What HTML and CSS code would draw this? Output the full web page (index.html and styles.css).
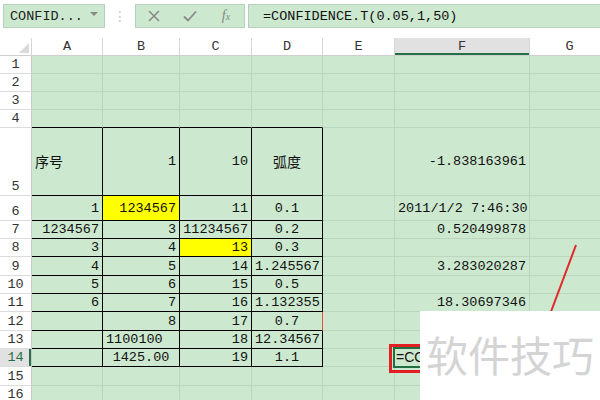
FILE: index.html
```html
<!DOCTYPE html>
<html lang="zh">
<head>
  <meta charset="UTF-8">
  <meta name="viewport" content="width=device-width, initial-scale=1.0">
  <title>CONFIDENCE.T</title>
  <link rel="stylesheet" href="styles.css">
</head>
<body>
  <div class="app">
    <!-- Barra de fórmulas -->
    <div class="toolbar">
      <div class="namebox"><span>CONFID...</span><span class="caret"></span></div>
      <div class="grip">⋮</div>
      <div class="fxbtns">
        <span class="btn">
          <svg width="12" height="12" viewBox="0 0 12 12"><path d="M1 1L11 11M11 1L1 11" stroke="#8a8a8a" stroke-width="1.6" fill="none"/></svg>
        </span>
        <span class="btn">
          <svg width="14" height="12" viewBox="0 0 14 12"><path d="M1 6.5L5 10.5L13 1.5" stroke="#8a8a8a" stroke-width="1.8" fill="none"/></svg>
        </span>
        <span class="btn fx">f<sub>x</sub></span>
      </div>
      <div class="formula">=CONFIDENCE.T(0.05,1,50)</div>
    </div>

    <!-- Hoja -->
    <table class="sheet">
      <colgroup>
        <col class="w-rh"><col class="w-a"><col class="w-b"><col class="w-c"><col class="w-d"><col class="w-e"><col class="w-f"><col class="w-g">
      </colgroup>
      <tr class="h18 head">
        <th class="corner"><span class="tri"></span></th>
        <th>A</th><th>B</th><th>C</th><th>D</th><th>E</th><th class="cur">F</th><th>G</th>
      </tr>
      <tr class="h18"><th class="rh">1</th><td></td><td></td><td></td><td></td><td></td><td></td><td></td></tr>
      <tr class="h18"><th class="rh">2</th><td></td><td></td><td></td><td></td><td></td><td></td><td></td></tr>
      <tr class="h18"><th class="rh">3</th><td></td><td></td><td></td><td></td><td></td><td></td><td></td></tr>
      <tr class="h18"><th class="rh">4</th><td class="tb"></td><td class="tb"></td><td class="tb"></td><td class="tb"></td><td></td><td></td><td></td></tr>
      <tr class="h68"><th class="rh">5</th>
        <td class="t left cn">序号</td><td class="t">1</td><td class="t">10</td><td class="t mid cn">弧度</td><td></td><td>-1.838163961</td><td></td></tr>
      <tr class="h25"><th class="rh">6</th>
        <td class="t">1</td><td class="t hl">1234567</td><td class="t">11</td><td class="t mid">0.1</td><td></td><td>2011/1/2 7:46:30</td><td></td></tr>
      <tr class="h18"><th class="rh">7</th>
        <td class="t">1234567</td><td class="t">3</td><td class="t">11234567</td><td class="t mid">0.2</td><td></td><td>0.520499878</td><td></td></tr>
      <tr class="h18"><th class="rh">8</th>
        <td class="t">3</td><td class="t">4</td><td class="t hl">13</td><td class="t mid">0.3</td><td></td><td></td><td></td></tr>
      <tr class="h19"><th class="rh">9</th>
        <td class="t">4</td><td class="t">5</td><td class="t">14</td><td class="t mid">1.245567</td><td></td><td>3.283020287</td><td></td></tr>
      <tr class="h18"><th class="rh">10</th>
        <td class="t">5</td><td class="t">6</td><td class="t">15</td><td class="t mid">0.5</td><td></td><td></td><td></td></tr>
      <tr class="h18"><th class="rh">11</th>
        <td class="t">6</td><td class="t">7</td><td class="t">16</td><td class="t mid">1.132355</td><td></td><td>18.30697346</td><td></td></tr>
      <tr class="h19"><th class="rh">12</th>
        <td class="t"></td><td class="t">8</td><td class="t">17</td><td class="t mid mark">0.7</td><td></td><td></td><td></td></tr>
      <tr class="h18"><th class="rh">13</th>
        <td class="t"></td><td class="t left">1100100</td><td class="t">18</td><td class="t mid">12.34567</td><td></td><td></td><td></td></tr>
      <tr class="h18"><th class="rh">14</th>
        <td class="t"></td><td class="t mid">1425.00</td><td class="t">19</td><td class="t mid">1.1</td><td></td>
        <td class="sel"><span class="ring-red"></span><span class="ring-green"></span><span class="edit">=CO</span></td><td></td></tr>
      <tr class="h19"><th class="rh">15</th><td></td><td></td><td></td><td></td><td></td><td></td><td></td></tr>
      <tr class="h18"><th class="rh">16</th><td></td><td></td><td></td><td></td><td></td><td></td><td></td></tr>
    </table>

    <!-- Flecha roja y marca de agua -->
    <svg class="arrow" width="600" height="400" viewBox="0 0 600 400">
      <line x1="576" y1="245" x2="546" y2="325" stroke="#e02a2a" stroke-width="2"/>
    </svg>
    <div class="watermark">软件技巧</div>
  </div>
</body>
</html>
```

FILE: styles.css
```css
body, html {
  margin: 0;
  background: #fff;
}

.app {
  position: relative;
  width: 600px;
  height: 400px;
  overflow: hidden;
  font-family: "Liberation Mono", "DejaVu Sans Mono", monospace;
  font-size: 13.5px;
  color: #111;
}

/* Barra de fórmulas */
.toolbar {
  display: flex;
  align-items: stretch;
  height: 24px;
  padding: 4px 0 0 3px;
}

.namebox {
  display: flex;
  align-items: center;
  justify-content: space-between;
  padding: 0 6px 0 6px;
  box-sizing: border-box;
  width: 102px;
  background: #cce8cf;
  border: 1px solid #b9cdbb;
  color: #222;
}

.caret {
  width: 0;
  height: 0;
  border-left: 4px solid transparent;
  border-right: 4px solid transparent;
  border-top: 4px solid #8a8a8a;
  margin-bottom: 4px;
}

.grip {
  width: 30px;
  display: flex;
  align-items: center;
  justify-content: center;
  color: #c4c4c4;
  font-size: 14px;
  font-family: "DejaVu Sans", sans-serif;
}

.fxbtns {
  display: flex;
  width: 110px;
  box-sizing: border-box;
  background: #cce8cf;
  border: 1px solid #b9cdbb;
}

.btn {
  width: 36px;
  display: flex;
  align-items: center;
  justify-content: center;
}

.fx {
  font-family: "Liberation Serif", serif;
  font-style: italic;
  font-size: 14px;
  color: #8a8a8a;
}

.fx sub {
  font-size: 10px;
  vertical-align: -1px;
}

.formula {
  flex: 1;
  margin-left: 3px;
  margin-right: -20px;
  display: flex;
  align-items: center;
  padding-left: 14px;
  background: #cce8cf;
  border: 1px solid #b9cdbb;
  color: #111;
}

/* Hoja */
.sheet {
  margin-top: 10px;
  border-collapse: separate;
  border-spacing: 0;
  table-layout: fixed;
  width: 610px;
}

.w-rh { width: 32px; }
.w-a { width: 71px; }
.w-b { width: 77px; }
.w-c { width: 72px; }
.w-d { width: 71px; }
.w-e { width: 72px; }
.w-f { width: 135px; }
.w-g { width: 80px; }

.h18 { height: 18px; }
.h19 { height: 19px; }
.h25 { height: 25px; }
.h68 { height: 68px; }

.sheet th, .sheet td {
  padding: 0 3px;
  line-height: 15px;
  white-space: nowrap;
  overflow: hidden;
  box-sizing: border-box;
}

.sheet th {
  background: #fff;
  font-weight: normal;
  color: #333;
  text-align: center;
  border-right: 1px solid #d6d6d6;
  border-bottom: 1px solid #dcdcdc;
}

.head th {
  vertical-align: bottom;
  padding-bottom: 1px;
  border-bottom-color: #cfcfcf;
}

.head th.cur {
  background: #e1e1e1;
  box-shadow: inset 0 -2px 0 #217346;
}

.corner {
  padding: 0 !important;
}

.tri {
  display: block;
  width: 0;
  height: 0;
  margin: 0 0 2px 19px;
  border-left: 10px solid transparent;
  border-bottom: 10px solid #dadada;
}

.rh {
  vertical-align: bottom;
  padding: 0 0 1px 0 !important;
  border-right-color: #c9c9c9 !important;
}

.sheet tr:nth-child(15) .rh {
  background: #e1e1e1;
  color: #217346;
  box-shadow: inset -2px 0 0 #217346;
}

.sheet td {
  background: #cce8cf;
  border-right: 1px solid #bdd4bf;
  border-bottom: 1px solid #bdd4bf;
  text-align: right;
  vertical-align: middle;
}

/* Tabla con bordes negros */
.sheet td.t {
  border-right-color: #000;
  border-bottom-color: #000;
}

.sheet td.tb {
  border-bottom-color: #000;
}

.sheet td.mark {
  border-right-color: #e8503a;
}

.sheet td.hl {
  background: #ffff00;
}

.sheet td.left {
  text-align: left;
}

.sheet td.mid {
  text-align: center;
}

.cn {
  font-family: "Noto Sans CJK SC", sans-serif;
  font-size: 14px;
}

/* Celda en edición */
.sheet td.sel {
  position: relative;
  overflow: visible;
  text-align: left;
  padding-left: 1px;
}

.ring-red {
  position: absolute;
  left: -6px;
  top: -5px;
  right: -6px;
  bottom: -7px;
  border: 3px solid #e31e24;
}

.ring-green {
  position: absolute;
  left: -2px;
  top: -2px;
  right: -2px;
  bottom: -2px;
  border: 2px solid #1f6f43;
}

.edit {
  position: relative;
  font-family: "Liberation Sans", Arial, sans-serif;
  font-size: 14px;
  color: #111;
}

.arrow {
  position: absolute;
  left: 0;
  top: 0;
  pointer-events: none;
}

.watermark {
  position: absolute;
  left: 420px;
  top: 311px;
  width: 180px;
  height: 89px;
  background: #fff;
  box-sizing: border-box;
  padding: 22px 0 0 6px;
  font-family: "Noto Sans CJK SC", sans-serif;
  font-size: 42px;
  line-height: 42px;
  color: #d4d4d4;
  white-space: nowrap;
}
```
